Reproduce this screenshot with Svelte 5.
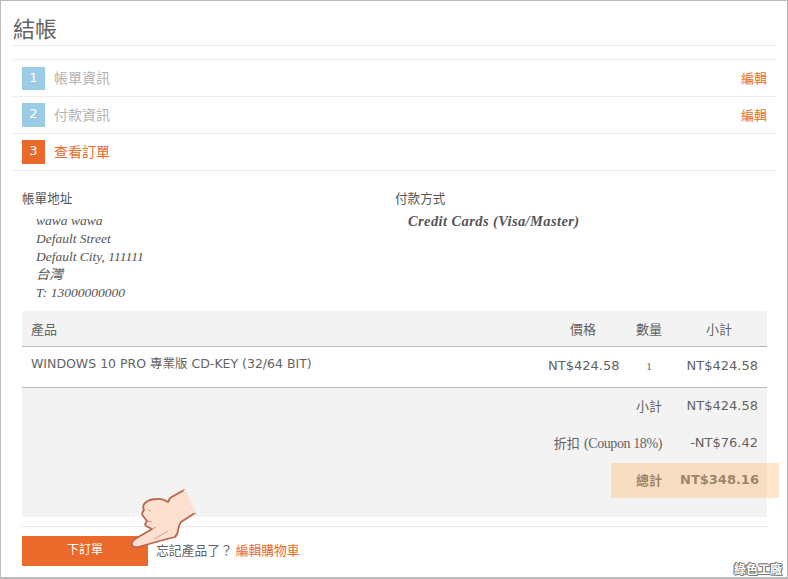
<script>
  const steps = [
    { n: 1, label: "帳單資訊", edit: true },
    { n: 2, label: "付款資訊", edit: true },
    { n: 3, label: "查看訂單", edit: false }
  ];
  const address = ["wawa wawa", "Default Street", "Default City, 111111", "台灣", "T: 13000000000"];
</script>

<div class="page">
  <h1>結帳</h1>
  <ul class="steps">
    {#each steps as step}
      <li class:active={!step.edit}>
        <span class="num">{step.n}</span>
        <span class="label">{step.label}</span>
        {#if step.edit}<a href="#top">編輯</a>{/if}
      </li>
    {/each}
  </ul>

  <div class="review">
    <div class="info">
      <div class="bill">
        <h2>帳單地址</h2>
        <address>
          {#each address as line}<div>{line}</div>{/each}
        </address>
      </div>
      <div class="pay">
        <h2>付款方式</h2>
        <p>Credit Cards (Visa/Master)</p>
      </div>
    </div>

    <table>
      <colgroup><col /><col class="c1" /><col class="c2" /><col class="c3" /></colgroup>
      <thead>
        <tr><th class="name">產品</th><th>價格</th><th>數量</th><th>小計</th></tr>
      </thead>
      <tbody>
        <tr>
          <td class="name">WINDOWS 10 PRO 專業版 CD-KEY (32/64 BIT)</td>
          <td class="r">NT$424.58</td>
          <td class="qty">1</td>
          <td class="r">NT$424.58</td>
        </tr>
      </tbody>
      <tfoot>
        <tr class="f1"><td colspan="3" class="r">小計</td><td class="r">NT$424.58</td></tr>
        <tr class="f2"><td colspan="3" class="r">折扣 <span class="serif">(Coupon 18%)</span></td><td class="r">-NT$76.42</td></tr>
        <tr class="f3"><td colspan="3" class="r"><b>總計</b></td><td class="r"><b>NT$348.16</b></td></tr>
      </tfoot>
    </table>

    <div class="actions">
      <button>下訂單</button>
      <span class="forgot">忘記產品了？ <a href="#top">編輯購物車</a></span>
    </div>
  </div>

  <div class="highlight"></div>
  <svg class="hand" viewBox="130 487 68 63" width="68" height="63">
    <path d="M184 490 L170 498 L168 502 Q162 498 157 499 Q149 499 145 503 Q142 506 144 510 Q141 513 143 516 L147 521 Q144 524 146 526 L152 529 L135 539 Q131 542 132 545 Q134 548 138 547 L167 539 L175 537 Q178 534 178 530 Q179 525 181 522 L195 513 Z" fill="#fde0d0" stroke="#b9664c" stroke-width="1.8" stroke-linejoin="round" />
    <path d="M184 490 L195 513" stroke="#fdf0e6" stroke-width="2" fill="none" />
    <path d="M151 511 L148 510 M152 522 L148 521 M152 529 L156 527 M168 531 L154 539" stroke="#d99a84" stroke-width="1" fill="none" />
  </svg>
  <div class="mark">綠色工廠</div>
</div>

<style>
  :global(body) {
    margin: 0;
    background: #fff;
  }

  .page {
    position: relative;
    box-sizing: border-box;
    width: 788px;
    height: 579px;
    padding: 0 10px 0 12px;
    border: 1px solid #bbb;
    border-bottom-width: 2px;
    font-family: "DejaVu Sans", "Noto Sans CJK TC", sans-serif;
    font-size: 13px;
    color: #636363;
    overflow: hidden;
  }

  h1 {
    margin: 0;
    height: 45px;
    box-sizing: border-box;
    padding-top: 11px;
    font-family: "Noto Sans CJK TC", sans-serif;
    font-size: 22px;
    line-height: 30px;
    font-weight: 400;
    color: #636363;
    border-bottom: 1px solid #ececec;
  }

  .steps {
    list-style: none;
    margin: 13px 0 0;
    padding: 0;
    border-top: 1px solid #ececec;
  }

  .steps li {
    display: flex;
    align-items: center;
    height: 36px;
    padding: 0 9px;
    border-bottom: 1px solid #ececec;
    font-family: "Noto Sans CJK TC", sans-serif;
    font-size: 14px;
    color: #b4b4b4;
  }

  .num {
    width: 23px;
    height: 24px;
    margin-right: 9px;
    background: #9acce6;
    color: #fff;
    font-family: "DejaVu Sans", sans-serif;
    font-size: 13px;
    line-height: 22px;
    text-align: center;
  }

  .steps li:first-child .num {
    height: 23px;
    margin-top: 1px;
  }

  .label {
    padding-bottom: 2px;
  }

  .active .num {
    background: #ec692c;
  }

  .active .label {
    color: #ec692c;
  }

  .steps a {
    margin-left: auto;
    margin-right: 1px;
    padding-bottom: 2px;
    color: #ec692c;
    font-size: 13px;
    text-decoration: none;
  }

  .review {
    padding: 0 9px;
  }

  .info {
    display: flex;
    height: 140px;
    padding-top: 18px;
    box-sizing: border-box;
  }

  .bill {
    width: 373px;
  }

  h2 {
    margin: 0;
    font-family: "Noto Sans CJK TC", sans-serif;
    font-size: 12.6px;
    line-height: 18px;
    font-weight: 400;
    color: #555;
  }

  address {
    margin: 5px 0 0 14px;
    font-family: "Liberation Serif", "Noto Sans CJK TC", serif;
    font-size: 13.5px;
    line-height: 18px;
    font-style: italic;
    color: #555;
  }

  .pay p {
    margin: 5px 0 0 13px;
    font-family: "Liberation Serif", serif;
    font-size: 14.5px;
    line-height: 18px;
    font-style: italic;
    font-weight: 700;
    letter-spacing: 0.4px;
    color: #555;
  }

  table {
    width: 745px;
    border-collapse: collapse;
    table-layout: fixed;
  }

  .c1 { width: 88px; }
  .c2 { width: 44px; }
  .c3 { width: 96px; }

  th {
    height: 35px;
    padding: 0 9px;
    background: #f3f3f3;
    border-bottom: 1px solid #bbb;
    font-family: "Noto Sans CJK TC", sans-serif;
    font-size: 13px;
    font-weight: 400;
    color: #636363;
  }

  th.name, td.name {
    text-align: left;
  }

  td {
    padding: 0 9px;
  }

  tbody td {
    height: 41px;
    border-bottom: 1px solid #bbb;
    padding-bottom: 3px;
    box-sizing: border-box;
  }

  tbody td.name {
    font-size: 12.5px;
    padding-bottom: 9px;
  }

  .r {
    text-align: right;
  }

  .qty {
    text-align: center;
    font-family: "Liberation Serif", serif;
    font-size: 11px;
  }

  tfoot td {
    background: #f3f3f3;
  }

  .f1 td {
    height: 37px;
    padding-bottom: 2px;
    box-sizing: border-box;
  }

  .f2 td {
    height: 36px;
    box-sizing: border-box;
  }

  .f3 td {
    height: 56px;
    padding-bottom: 18px;
    box-sizing: border-box;
  }

  .serif {
    font-family: "Liberation Serif", serif;
    font-size: 14px;
    letter-spacing: -0.4px;
  }

  .actions {
    display: flex;
    align-items: center;
    gap: 9px;
    margin: 9px 0 0;
    padding-top: 9px;
    border-top: 1px solid #ececec;
  }

  button {
    width: 126px;
    height: 30px;
    padding: 0 0 5px;
    border: 0;
    background: #ec692c;
    color: #fff;
    font-family: "Noto Sans CJK TC", sans-serif;
    font-size: 12px;
  }

  .forgot {
    margin-top: -2px;
    margin-left: -1px;
    font-family: "Noto Sans CJK TC", sans-serif;
    font-size: 12.8px;
  }

  .forgot a {
    color: #ec692c;
    text-decoration: none;
  }

  .highlight {
    position: absolute;
    left: 610px;
    top: 462px;
    width: 168px;
    height: 35px;
    background: rgba(255, 190, 118, 0.38);
  }

  .hand {
    position: absolute;
    left: 129px;
    top: 486px;
  }

  .mark {
    position: absolute;
    right: 5px;
    bottom: 1px;
    font-family: "Noto Sans CJK TC", sans-serif;
    font-size: 12px;
    font-weight: 700;
    line-height: 14px;
    color: #fff;
    text-shadow: 1px 0 #777, -1px 0 #777, 0 1px #777, 0 -1px #777, 1px 1px #777, -1px -1px #777;
  }
</style>
